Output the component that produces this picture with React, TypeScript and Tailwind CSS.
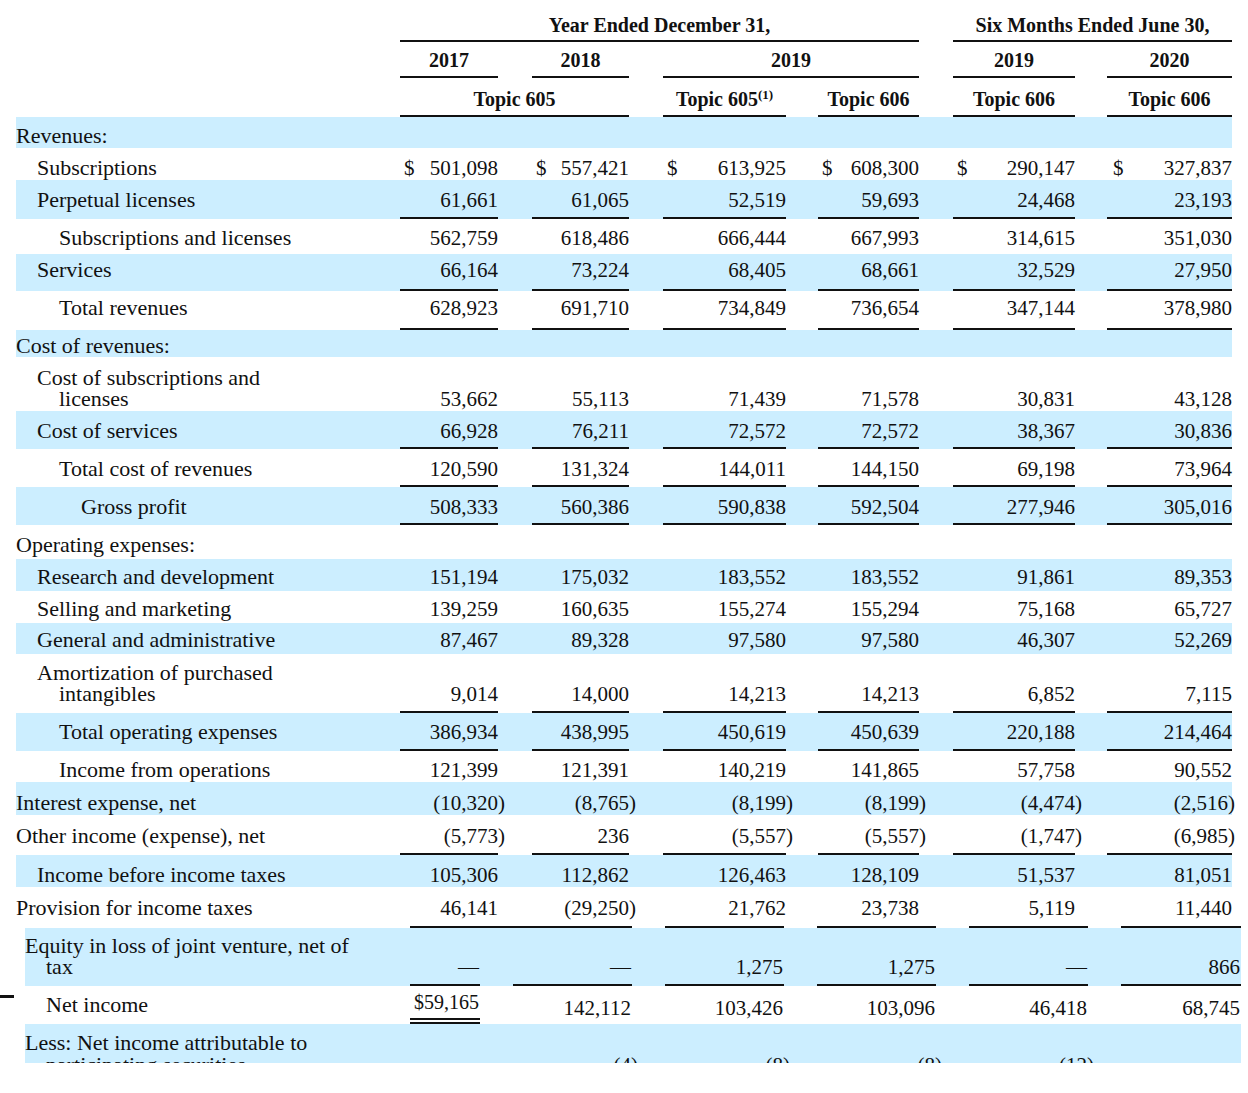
import React from "react";

const TOP =
  "grid grid-cols-[384px_98px_34px_97px_34px_123px_32px_101px_34px_122px_32px_125px] w-[1216px]";
const BOT =
  "grid grid-cols-[385px_70px_33px_119px_33px_119px_33px_119px_33px_119px_33px_120px] w-[1216px]";
const BLUE = "bg-[#cceeff]";
const LINE = "shadow-[inset_0_-2px_0_#111]";

type Row = {
  label: string;
  label2?: string;
  ind: string;
  ind2?: string;
  blue?: boolean;
  h: string;
  pb: string;
  line?: boolean;
  dollar?: boolean;
  vals?: string[];
};

const rows: Row[] = [
  { label: "Revenues:", ind: "pl-0", blue: true, h: "h-[31px]", pb: "pb-[1px]" },
  { label: "Subscriptions", ind: "pl-[21px]", h: "h-[32px]", pb: "pb-[1px]", dollar: true, vals: ["501,098", "557,421", "613,925", "608,300", "290,147", "327,837"] },
  { label: "Perpetual licenses", ind: "pl-[21px]", blue: true, h: "h-[39px]", pb: "pb-[8px]", line: true, vals: ["61,661", "61,065", "52,519", "59,693", "24,468", "23,193"] },
  { label: "Subscriptions and licenses", ind: "pl-[43px]", h: "h-[35px]", pb: "pb-[5px]", vals: ["562,759", "618,486", "666,444", "667,993", "314,615", "351,030"] },
  { label: "Services", ind: "pl-[21px]", blue: true, h: "h-[37px]", pb: "pb-[10px]", line: true, vals: ["66,164", "73,224", "68,405", "68,661", "32,529", "27,950"] },
  { label: "Total revenues", ind: "pl-[43px]", h: "h-[39px]", pb: "pb-[11px]", line: true, vals: ["628,923", "691,710", "734,849", "736,654", "347,144", "378,980"] },
  { label: "Cost of revenues:", ind: "pl-0", blue: true, h: "h-[27px]", pb: "pb-[0px]" },
  { label: "Cost of subscriptions and", label2: "licenses", ind: "pl-[21px]", ind2: "pl-[43px]", h: "h-[54px]", pb: "pb-[1px]", vals: ["53,662", "55,113", "71,439", "71,578", "30,831", "43,128"] },
  { label: "Cost of services", ind: "pl-[21px]", blue: true, h: "h-[38px]", pb: "pb-[7px]", line: true, vals: ["66,928", "76,211", "72,572", "72,572", "38,367", "30,836"] },
  { label: "Total cost of revenues", ind: "pl-[43px]", h: "h-[38px]", pb: "pb-[7px]", line: true, vals: ["120,590", "131,324", "144,011", "144,150", "69,198", "73,964"] },
  { label: "Gross profit", ind: "pl-[65px]", blue: true, h: "h-[38px]", pb: "pb-[7px]", line: true, vals: ["508,333", "560,386", "590,838", "592,504", "277,946", "305,016"] },
  { label: "Operating expenses:", ind: "pl-0", h: "h-[34px]", pb: "pb-[3px]" },
  { label: "Research and development", ind: "pl-[21px]", blue: true, h: "h-[32px]", pb: "pb-[3px]", vals: ["151,194", "175,032", "183,552", "183,552", "91,861", "89,353"] },
  { label: "Selling and marketing", ind: "pl-[21px]", h: "h-[32px]", pb: "pb-[3px]", vals: ["139,259", "160,635", "155,274", "155,294", "75,168", "65,727"] },
  { label: "General and administrative", ind: "pl-[21px]", blue: true, h: "h-[31px]", pb: "pb-[3px]", vals: ["87,467", "89,328", "97,580", "97,580", "46,307", "52,269"] },
  { label: "Amortization of purchased", label2: "intangibles", ind: "pl-[21px]", ind2: "pl-[43px]", h: "h-[59px]", pb: "pb-[8px]", line: true, vals: ["9,014", "14,000", "14,213", "14,213", "6,852", "7,115"] },
  { label: "Total operating expenses", ind: "pl-[43px]", blue: true, h: "h-[38px]", pb: "pb-[8px]", line: true, vals: ["386,934", "438,995", "450,619", "450,639", "220,188", "214,464"] },
  { label: "Income from operations", ind: "pl-[43px]", h: "h-[31px]", pb: "pb-[1px]", vals: ["121,399", "121,391", "140,219", "141,865", "57,758", "90,552"] },
  { label: "Interest expense, net", ind: "pl-0", blue: true, h: "h-[33px]", pb: "pb-[1px]", vals: ["(10,320)", "(8,765)", "(8,199)", "(8,199)", "(4,474)", "(2,516)"] },
  { label: "Other income (expense), net", ind: "pl-0", h: "h-[40px]", pb: "pb-[8px]", line: true, vals: ["(5,773)", "236", "(5,557)", "(5,557)", "(1,747)", "(6,985)"] },
  { label: "Income before income taxes", ind: "pl-[21px]", blue: true, h: "h-[32px]", pb: "pb-[1px]", vals: ["105,306", "112,862", "126,463", "128,109", "51,537", "81,051"] },
  { label: "Provision for income taxes", ind: "pl-0", h: "h-[39px]", pb: "pb-[7px]", vals: ["46,141", "(29,250)", "21,762", "23,738", "5,119", "11,440"] },
];

function Num({ v, last }: { v: string; last?: boolean }) {
  if (v.startsWith("(") && v.endsWith(")")) {
    return (
      <span className="whitespace-nowrap">
        {v.slice(0, -1)}
        <span className={last ? "-mr-[3px]" : "-mr-[7px]"}>)</span>
      </span>
    );
  }
  return <span className="whitespace-nowrap">{v}</span>;
}

function TopRow({ r }: { r: Row }) {
  const cells: React.ReactNode[] = [];
  cells.push(
    <div key="l" className={`flex flex-col justify-end ${r.pb} text-[22px] leading-[21px]`}>
      <div className={`${r.ind} -translate-y-px`}>{r.label}</div>
      {r.label2 ? <div className={`${r.ind2} -translate-y-px`}>{r.label2}</div> : null}
    </div>
  );
  for (let i = 0; i < 6; i++) {
    const v = r.vals ? r.vals[i] : "";
    cells.push(
      <div
        key={"c" + i}
        className={`flex items-end justify-between ${r.pb} text-[21px] leading-[22px] ${r.line ? LINE : ""}`}
      >
        <span className={i === 5 ? "pl-[6px]" : "pl-[4px]"}>{r.dollar ? "$" : ""}</span>
        <Num v={v} last={i === 5} />
      </div>
    );
    if (i < 5) cells.push(<div key={"g" + i} />);
  }
  return <div className={`${TOP} ${r.h} ${r.blue ? BLUE : "bg-white"}`}>{cells}</div>;
}

function BotCell({ v, line, pb }: { v: string; line?: boolean; pb: string }) {
  return (
    <div className={`flex items-end justify-end pr-[1px] ${pb} text-[21px] leading-[22px] ${line ? LINE : ""}`}>
      <Num v={v} />
    </div>
  );
}

export default function App() {
  const H = "font-bold text-[20px] leading-[22px] flex items-end justify-center";
  return (
    <div className="w-[1248px] h-[1093px] bg-white text-[#111] font-['Liberation_Serif',serif] overflow-hidden">
      <div className="pl-[16px]">
        {/* header row 1 */}
        <div className={`${TOP} h-[42px]`}>
          <div />
          <div className={`col-span-7 ${H} pb-[6px] ${LINE}`}>Year Ended December 31,</div>
          <div />
          <div className={`col-span-3 ${H} pb-[6px] ${LINE}`}>Six Months Ended June 30,</div>
        </div>
        {/* header row 2 */}
        <div className={`${TOP} h-[36px]`}>
          <div />
          <div className={`${H} pb-[7px] ${LINE}`}>2017</div>
          <div />
          <div className={`${H} pb-[7px] ${LINE}`}>2018</div>
          <div />
          <div className={`col-span-3 ${H} pb-[7px] ${LINE}`}>2019</div>
          <div />
          <div className={`${H} pb-[7px] ${LINE}`}>2019</div>
          <div />
          <div className={`${H} pb-[7px] ${LINE}`}>2020</div>
        </div>
        {/* header row 3 */}
        <div className={`${TOP} h-[39px]`}>
          <div />
          <div className={`col-span-3 ${H} pb-[7px] ${LINE}`}>Topic 605</div>
          <div />
          <div className={`${H} pb-[7px] ${LINE}`}>
            <span>
              Topic 605<span className="relative -top-[7px] text-[13px] leading-none">(1)</span>
            </span>
          </div>
          <div />
          <div className={`${H} pb-[7px] ${LINE}`}>Topic 606</div>
          <div />
          <div className={`${H} pb-[7px] ${LINE}`}>Topic 606</div>
          <div />
          <div className={`${H} pb-[7px] ${LINE}`}>Topic 606</div>
        </div>
        {rows.map((r, i) => (
          <TopRow key={i} r={r} />
        ))}
      </div>

      {/* shifted lower block */}
      <div className="flex flex-col">
        {/* separator line */}
        <div className="flex h-[2px]">
          <div className="w-[25px]" />
          <div className={BOT}>
            <div />
            <div className="col-span-3 bg-[#111]" />
            <div />
            <div className="bg-[#111]" />
            <div />
            <div className="bg-[#111]" />
            <div />
            <div className="bg-[#111]" />
            <div />
            <div className="bg-[#111]" />
          </div>
        </div>
        {/* Equity row */}
        <div className="flex h-[58px]">
          <div className="w-[25px] bg-white" />
          <div className={`${BOT} ${BLUE}`}>
            <div className="flex flex-col justify-end pb-[8px] text-[22px] leading-[21px]">
              <div className="-translate-y-px">Equity in loss of joint venture, net of</div>
              <div className="pl-[21px] -translate-y-px">tax</div>
            </div>
            <BotCell v="—" line pb="pb-[8px]" />
            <div />
            <BotCell v="—" line pb="pb-[8px]" />
            <div />
            <BotCell v="1,275" line pb="pb-[8px]" />
            <div />
            <BotCell v="1,275" line pb="pb-[8px]" />
            <div />
            <BotCell v="—" line pb="pb-[8px]" />
            <div />
            <BotCell v="866" line pb="pb-[8px]" />
          </div>
        </div>
        {/* Net income row */}
        <div className="flex h-[38px]">
          <div className="w-[25px] pt-[9px]">
            <div className="w-[14px] h-[3px] bg-[#111]" />
          </div>
          <div className={`${BOT} bg-white`}>
            <div className="flex flex-col justify-end pb-[8px] pl-[21px] text-[22px] leading-[21px]">
              <div className="-translate-y-px">Net income</div>
            </div>
            <div className="flex items-end justify-end pr-[1px] pb-[11px] text-[20px] leading-[22px] shadow-[inset_0_-2px_0_#111,inset_0_-4px_0_#fff,inset_0_-6px_0_#111]">
              $59,165
            </div>
            <div />
            <BotCell v="142,112" pb="pb-[5px]" />
            <div />
            <BotCell v="103,426" pb="pb-[5px]" />
            <div />
            <BotCell v="103,096" pb="pb-[5px]" />
            <div />
            <BotCell v="46,418" pb="pb-[5px]" />
            <div />
            <BotCell v="68,745" pb="pb-[5px]" />
          </div>
        </div>
        {/* Less row (clipped) */}
        <div className="flex h-[39px] overflow-hidden">
          <div className="w-[25px] bg-white" />
          <div className={`${BOT} ${BLUE} items-start`}>
            <div className="pt-[8px] text-[22px] leading-[22px]">
              <div>Less: Net income attributable to</div>
              <div className="pl-[21px]">participating securities</div>
            </div>
            <div />
            <div />
            <div className="flex justify-end pr-[1px] pt-[30px] text-[21px] leading-[22px]"><Num v="(4)" /></div>
            <div />
            <div className="flex justify-end pr-[1px] pt-[30px] text-[21px] leading-[22px]"><Num v="(8)" /></div>
            <div />
            <div className="flex justify-end pr-[1px] pt-[30px] text-[21px] leading-[22px]"><Num v="(8)" /></div>
            <div />
            <div className="flex justify-end pr-[1px] pt-[30px] text-[21px] leading-[22px]"><Num v="(12)" /></div>
            <div />
            <div />
          </div>
        </div>
      </div>
    </div>
  );
}
